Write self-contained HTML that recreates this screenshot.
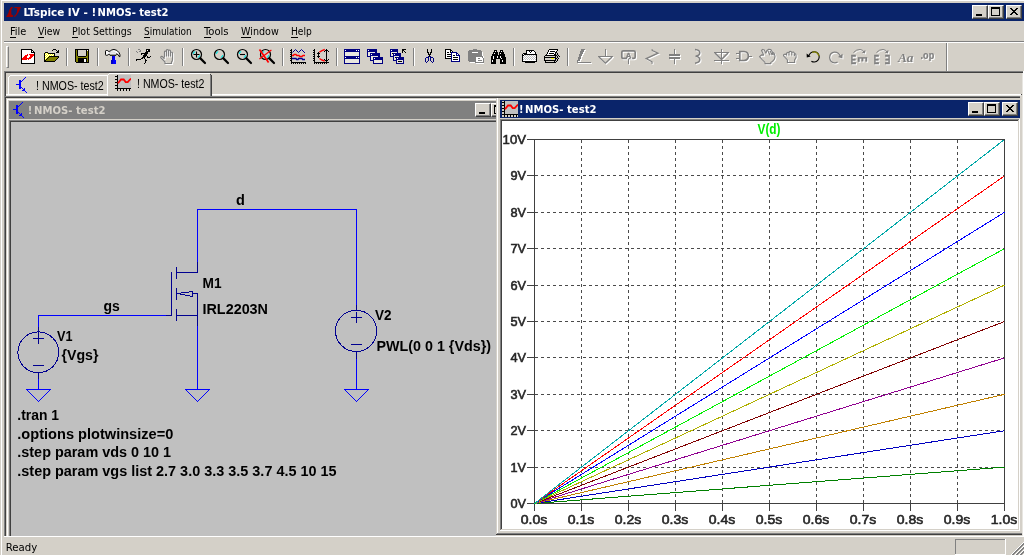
<!DOCTYPE html>
<html lang="en">
<head>
<meta charset="utf-8">
<title>LTspice IV - NMOS- test2</title>
<style>
html,body{margin:0;padding:0;background:#D4D0C8;}
body{width:1024px;height:555px;overflow:hidden;position:relative;font-family:"Liberation Sans",sans-serif;}
#app{position:absolute;left:0;top:0;width:1024px;height:555px;overflow:hidden;background:#D4D0C8;}
#app div,#app nav,#app header,#app footer,#app section,#app main{position:absolute;left:0;top:0;width:1024px;height:555px;margin:0;padding:0;}
i{position:absolute;display:block;font-style:normal;}
svg{position:absolute;display:block;overflow:hidden;}
svg.ov{left:0;top:0;pointer-events:none;will-change:transform;}
text{white-space:pre;}
.cbtn{position:absolute;display:block;background:#D4D0C8;box-sizing:border-box;
 border:1px solid;border-color:#FFFFFF #404040 #404040 #FFFFFF;
 box-shadow:inset -1px -1px 0 0 #808080;}
.cbtn i,.cbtn svg{margin:-1px 0 0 -1px;}
.tb{position:absolute;display:block;width:23px;height:22px;}
.tb svg{left:3px;top:3px;overflow:visible;}
.aa{position:absolute;left:3.6px;top:5.4px;font:italic bold 13.4px/14px 'Liberation Serif',serif;color:#808080;text-shadow:1px 1px 0 #fff;letter-spacing:-0.2px;white-space:pre;will-change:transform;}
.sep{position:absolute;display:block;width:2px;height:18px;background:#FFFFFF;border-left:1px solid #808080;box-sizing:border-box;}
</style>
</head>
<body>
<div id="app">
<i style="left:0px;top:0px;width:1024px;height:1px;background:#FFFFFF;"></i><i style="left:1px;top:0px;width:1px;height:555px;background:#FFFFFF;"></i><i style="left:0px;top:0px;width:1px;height:555px;background:#D4D0C8;"></i><i style="left:4px;top:71px;width:1px;height:465px;background:#808080;"></i><i style="left:5px;top:72px;width:1px;height:464px;background:#404040;"></i><i style="left:1022px;top:73px;width:1px;height:463px;background:#E8E6E1;"></i><i style="left:1023px;top:71px;width:1px;height:466px;background:#FFFFFF;"></i>
<header id="titlebar"><i style="left:4px;top:3px;width:1020px;height:18px;background:#0A246A;"></i><svg width="18" height="16" viewBox="0 0 18 16" style="left:5px;top:4px"><path d="M6 3H8L6.3 6V10L7 11H8.3L7.8 13H1L2 11.4L3.4 9L4.2 6Z" fill="#9A0000"/><path d="M9 3H16L15.2 5L12.6 10L10.5 12.4L9 13V12L10.4 11L11.8 8.6L12.2 5L12.3 4.2L10 4Z" fill="#9A0000"/></svg><svg class="ov" width="1024" height="555" viewBox="0 0 1024 555"><text y="16" font-family="'DejaVu Sans Condensed', 'Liberation Sans', sans-serif" font-size="11" font-weight="bold" fill="#fff" xml:space="preserve"><tspan x="23.4" textLength="72.8" lengthAdjust="spacingAndGlyphs">LTspice IV - !</tspan><tspan> </tspan><tspan x="97.6" textLength="71" lengthAdjust="spacingAndGlyphs">NMOS- test2</tspan></text></svg><span class="cbtn" style="left:972px;top:5px;width:16px;height:14px"><i style="left:4px;top:9px;width:6px;height:2px;background:#000"></i></span><span class="cbtn" style="left:988px;top:5px;width:16px;height:14px"><i style="left:3px;top:2px;width:9px;height:9px;box-sizing:border-box;border:1px solid #000;border-top-width:2px"></i></span><span class="cbtn" style="left:1006px;top:5px;width:16px;height:14px"><svg width="16" height="14" viewBox="0 0 16 14" shape-rendering="crispEdges" style="position:absolute;left:0;top:0"><path d="M4 3h2v1h1v1h2v-1h1v-1h2v1h-1v1h-1v1h-1v1h1v1h1v1h1v1h-2v-1h-1v-1h-2v1h-1v1h-2v-1h1v-1h1v-1h1v-1h-1v-1h-1v-1h-1z" fill="#000"/></svg></span></header>
<nav id="menubar"><svg class="ov" width="1024" height="555" viewBox="0 0 1024 555"><text x="10" y="35" font-family="'DejaVu Sans Condensed', 'Liberation Sans', sans-serif" font-size="11" fill="#000" textLength="16.3" lengthAdjust="spacingAndGlyphs" xml:space="preserve">File</text><text x="38" y="35" font-family="'DejaVu Sans Condensed', 'Liberation Sans', sans-serif" font-size="11" fill="#000" textLength="22.2" lengthAdjust="spacingAndGlyphs" xml:space="preserve">View</text><text x="72" y="35" font-family="'DejaVu Sans Condensed', 'Liberation Sans', sans-serif" font-size="11" fill="#000" textLength="59.8" lengthAdjust="spacingAndGlyphs" xml:space="preserve">Plot Settings</text><text x="144" y="35" font-family="'DejaVu Sans Condensed', 'Liberation Sans', sans-serif" font-size="11" fill="#000" textLength="47.8" lengthAdjust="spacingAndGlyphs" xml:space="preserve">Simulation</text><text x="204" y="35" font-family="'DejaVu Sans Condensed', 'Liberation Sans', sans-serif" font-size="11" fill="#000" textLength="24.6" lengthAdjust="spacingAndGlyphs" xml:space="preserve">Tools</text><text x="241" y="35" font-family="'DejaVu Sans Condensed', 'Liberation Sans', sans-serif" font-size="11" fill="#000" textLength="37.8" lengthAdjust="spacingAndGlyphs" xml:space="preserve">Window</text><text x="291" y="35" font-family="'DejaVu Sans Condensed', 'Liberation Sans', sans-serif" font-size="11" fill="#000" textLength="20.8" lengthAdjust="spacingAndGlyphs" xml:space="preserve">Help</text></svg><i style="left:10px;top:37px;width:6px;height:1px;background:#000;"></i><i style="left:38px;top:37px;width:6px;height:1px;background:#000;"></i><i style="left:72px;top:37px;width:6px;height:1px;background:#000;"></i><i style="left:144px;top:37px;width:6px;height:1px;background:#000;"></i><i style="left:204px;top:37px;width:7px;height:1px;background:#000;"></i><i style="left:241px;top:37px;width:10px;height:1px;background:#000;"></i><i style="left:291px;top:37px;width:7px;height:1px;background:#000;"></i></nav>
<div id="toolbar"><i style="left:4px;top:41px;width:1020px;height:1px;background:#808080;"></i><i style="left:4px;top:42px;width:1020px;height:1px;background:#FFFFFF;"></i><i style="left:6px;top:46px;width:3px;height:22px;background:#D4D0C8;box-sizing:border-box;border:1px solid;border-color:#fff #808080 #808080 #fff"></i><i style="left:946px;top:43px;width:1px;height:28px;background:#808080;"></i><i style="left:947px;top:43px;width:1px;height:28px;background:#FFFFFF;"></i><span class="tb" title="new" style="left:17px;top:46px"><svg width="18" height="17" viewBox="0 0 18 17" shape-rendering="crispEdges"><path d="M1 0h11v1h-11zM1 1h1v1h-1zM11 1h2v1h-2zM1 2h1v1h-1zM11 2h1v1h-1zM13 2h1v1h-1zM1 3h1v1h-1zM11 3h4v1h-4zM1 4h1v1h-1zM14 4h1v1h-1zM1 5h1v1h-1zM14 5h1v1h-1zM1 6h1v1h-1zM14 6h1v1h-1zM1 7h1v1h-1zM14 7h1v1h-1zM1 8h1v1h-1zM14 8h1v1h-1zM1 9h1v1h-1zM14 9h1v1h-1zM1 10h1v1h-1zM14 10h1v1h-1zM1 11h1v1h-1zM14 11h1v1h-1zM1 12h1v1h-1zM14 12h1v1h-1zM1 13h1v1h-1zM14 13h1v1h-1zM1 14h14v1h-14z" fill="#000000"/><path d="M2 1h9v1h-9zM2 2h9v1h-9zM12 2h1v1h-1zM2 3h9v1h-9zM2 4h12v1h-12zM2 5h5v1h-5zM8 5h1v1h-1zM2 6h3v1h-3zM8 6h2v1h-2zM2 7h2v1h-2zM7 7h3v1h-3zM13 7h1v1h-1zM2 8h1v1h-1zM7 8h2v1h-2zM12 8h2v1h-2zM11 9h3v1h-3zM7 10h1v1h-1zM9 10h5v1h-5zM2 11h12v1h-12zM2 12h12v1h-12zM2 13h12v1h-12z" fill="#FFFFFF"/><path d="M7 5h1v1h-1zM9 5h5v1h-5zM5 6h3v1h-3zM10 6h4v1h-4zM4 7h3v1h-3zM10 7h3v1h-3zM3 8h4v1h-4zM9 8h3v1h-3zM2 9h9v1h-9zM2 10h5v1h-5zM8 10h1v1h-1z" fill="#FF0000"/></svg></span><span class="tb" title="open" style="left:40px;top:46px"><svg width="18" height="17" viewBox="0 0 18 17" shape-rendering="crispEdges"><path d="M10 0h3v1h-3zM9 1h1v1h-1zM13 1h1v1h-1zM15 1h1v1h-1zM14 2h2v1h-2zM2 3h3v1h-3zM13 3h3v1h-3zM1 4h1v1h-1zM5 4h7v1h-7zM1 5h1v1h-1zM11 5h1v1h-1zM1 6h1v1h-1zM11 6h1v1h-1zM1 7h1v1h-1zM6 7h10v1h-10zM1 8h1v1h-1zM5 8h1v1h-1zM15 8h1v1h-1zM1 9h1v1h-1zM4 9h1v1h-1zM14 9h1v1h-1zM1 10h1v1h-1zM3 10h1v1h-1zM13 10h1v1h-1zM1 11h2v1h-2zM12 11h1v1h-1zM1 12h11v1h-11z" fill="#000000"/><path d="M2 4h1v1h-1zM4 4h1v1h-1zM3 5h1v1h-1zM5 5h1v1h-1zM7 5h1v1h-1zM9 5h1v1h-1zM2 6h1v1h-1zM4 6h1v1h-1zM6 6h1v1h-1zM8 6h1v1h-1zM10 6h1v1h-1zM3 7h1v1h-1zM5 7h1v1h-1zM2 8h1v1h-1zM4 8h1v1h-1zM3 9h1v1h-1zM2 10h1v1h-1z" fill="#FFFF00"/><path d="M3 4h1v1h-1zM2 5h1v1h-1zM4 5h1v1h-1zM6 5h1v1h-1zM8 5h1v1h-1zM10 5h1v1h-1zM3 6h1v1h-1zM5 6h1v1h-1zM7 6h1v1h-1zM9 6h1v1h-1zM2 7h1v1h-1zM4 7h1v1h-1zM3 8h1v1h-1zM2 9h1v1h-1z" fill="#FFFFFF"/><path d="M6 8h9v1h-9zM5 9h9v1h-9zM4 10h9v1h-9zM3 11h9v1h-9z" fill="#808000"/></svg></span><i class="sep" style="left:66px;top:48px"></i><span class="tb" title="save" style="left:71px;top:46px"><svg width="18" height="17" viewBox="0 0 18 17" shape-rendering="crispEdges"><path d="M1 0h14v1h-14zM1 1h1v1h-1zM3 1h1v1h-1zM12 1h1v1h-1zM14 1h1v1h-1zM1 2h1v1h-1zM3 2h1v1h-1zM12 2h1v1h-1zM14 2h1v1h-1zM1 3h1v1h-1zM3 3h1v1h-1zM12 3h1v1h-1zM14 3h1v1h-1zM1 4h1v1h-1zM3 4h1v1h-1zM12 4h1v1h-1zM14 4h1v1h-1zM1 5h1v1h-1zM3 5h1v1h-1zM12 5h1v1h-1zM14 5h1v1h-1zM1 6h1v1h-1zM3 6h1v1h-1zM12 6h1v1h-1zM14 6h1v1h-1zM1 7h1v1h-1zM4 7h8v1h-8zM14 7h1v1h-1zM1 8h1v1h-1zM14 8h1v1h-1zM1 9h1v1h-1zM4 9h9v1h-9zM14 9h1v1h-1zM1 10h1v1h-1zM4 10h6v1h-6zM12 10h1v1h-1zM14 10h1v1h-1zM1 11h1v1h-1zM4 11h6v1h-6zM12 11h1v1h-1zM14 11h1v1h-1zM1 12h1v1h-1zM4 12h6v1h-6zM12 12h1v1h-1zM14 12h1v1h-1zM2 13h13v1h-13z" fill="#000000"/><path d="M2 1h1v1h-1zM2 2h1v1h-1zM13 2h1v1h-1zM2 3h1v1h-1zM13 3h1v1h-1zM2 4h1v1h-1zM13 4h1v1h-1zM2 5h1v1h-1zM13 5h1v1h-1zM2 6h1v1h-1zM13 6h1v1h-1zM2 7h2v1h-2zM12 7h2v1h-2zM2 8h12v1h-12zM2 9h2v1h-2zM13 9h1v1h-1zM2 10h2v1h-2zM13 10h1v1h-1zM2 11h2v1h-2zM13 11h1v1h-1zM2 12h2v1h-2zM13 12h1v1h-1z" fill="#808000"/><path d="M4 1h8v1h-8zM4 2h8v1h-8zM4 3h8v1h-8zM4 4h8v1h-8zM4 5h8v1h-8zM4 6h8v1h-8z" fill="#D4D0C8"/><path d="M13 1h1v1h-1zM10 10h2v1h-2zM10 11h2v1h-2zM10 12h2v1h-2z" fill="#FFFFFF"/></svg></span><i class="sep" style="left:97px;top:48px"></i><span class="tb" title="hammer" style="left:102px;top:46px"><svg width="18" height="17" viewBox="0 0 18 17" shape-rendering="crispEdges"><g shape-rendering="geometricPrecision" transform="translate(-1 0)"><path d="M1.5 2.2Q1.5 1.5 2.3 1.5H3.2Q4 1.5 4.3 2.3L6 2.3Q7.5 0.5 10 0.5Q13 0.6 15 3.6Q16.3 5.6 16 7.6L15.2 7.6Q14.6 5.2 12.4 4.8L12 6.3H6L5.6 5.2L4.3 5.4Q4 6.3 3.2 6.3H2.3Q1.5 6.3 1.5 5.6Z" fill="#FFFFFF" stroke="#000" stroke-width="1"/><path d="M6 5.4H12.2" stroke="#A0A0A0" stroke-width="1.2" fill="none"/><path d="M5 3.4Q8 2.6 11.5 3.4" stroke="#C8C8C8" stroke-width="0.9" fill="none"/></g><path d="M7 7h1v1h-1zM7 8h1v1h-1zM7 9h1v1h-1zM7 10h1v1h-1zM6 11h2v1h-2zM6 12h2v1h-2zM6 13h2v1h-2zM6 14h2v1h-2z" fill="#0000C0"/><path d="M8 7h2v1h-2zM8 8h2v1h-2zM8 9h2v1h-2zM8 10h2v1h-2zM8 11h3v1h-3zM8 12h3v1h-3zM8 13h3v1h-3zM8 14h3v1h-3z" fill="#0000FF"/></svg></span><i class="sep" style="left:128px;top:48px"></i><span class="tb" title="run" style="left:133px;top:46px"><svg width="18" height="17" viewBox="0 0 18 17" shape-rendering="crispEdges"><path d="M2 0h2v1h-2zM4 1h1v1h-1zM0 2h1v1h-1zM3 2h2v1h-2zM1 3h1v1h-1z" fill="#808080"/><path d="M10 0h4v1h-4zM10 1h1v1h-1zM12 1h2v1h-2zM10 2h4v1h-4zM9 3h3v1h-3zM5 4h7v1h-7zM5 5h1v1h-1zM8 5h3v1h-3zM7 6h4v1h-4zM7 7h3v1h-3zM11 7h1v1h-1zM14 7h1v1h-1zM6 8h3v1h-3zM11 8h3v1h-3zM5 9h2v1h-2zM8 9h1v1h-1zM0 10h5v1h-5zM9 10h1v1h-1zM0 11h1v1h-1zM9 11h2v1h-2zM9 12h1v1h-1zM9 13h1v1h-1zM8 14h1v1h-1z" fill="#000000"/><path d="M11 1h1v1h-1z" fill="#FFFFFF"/></svg></span><span class="tb" title="halt" style="left:156px;top:46px"><svg width="18" height="17" viewBox="0 0 18 17" shape-rendering="crispEdges"><g transform="translate(1 1)" stroke="#FFFFFF" fill="#FFFFFF" color="#FFFFFF"><path d="M5.5 8.5V3Q5.5 2 6.5 2T7.5 3V1.5Q7.5 0.5 8.5 0.5T9.5 1.5V2Q9.5 1 10.5 1T11.5 2V4Q11.5 3 12.5 3T13.5 4V10.5Q13.5 12 12.5 13V14.5H6V13L2 8.8Q1.4 8 2.2 7.6Q3 7.2 3.8 8L5.5 9.8M7.5 3V7.5M9.5 2V7.5M11.5 4V7.5" fill="none" stroke-width="1.2" shape-rendering="geometricPrecision"/></g><g stroke="#808080" fill="#808080" color="#808080"><path d="M5.5 8.5V3Q5.5 2 6.5 2T7.5 3V1.5Q7.5 0.5 8.5 0.5T9.5 1.5V2Q9.5 1 10.5 1T11.5 2V4Q11.5 3 12.5 3T13.5 4V10.5Q13.5 12 12.5 13V14.5H6V13L2 8.8Q1.4 8 2.2 7.6Q3 7.2 3.8 8L5.5 9.8M7.5 3V7.5M9.5 2V7.5M11.5 4V7.5" fill="none" stroke-width="1.2" shape-rendering="geometricPrecision"/></g></svg></span><i class="sep" style="left:182px;top:48px"></i><span class="tb" title="zoomin" style="left:187px;top:46px"><svg width="18" height="17" viewBox="0 0 18 17" shape-rendering="crispEdges"><g shape-rendering="geometricPrecision"><circle cx="6.5" cy="5.5" r="5" fill="none" stroke="#000" stroke-width="1.2"/><path d="M10.4 9.4L15 14" stroke="#000" stroke-width="2.2" stroke-linecap="round"/><path d="M3.2 4.8Q3.6 3 5.2 2.4" stroke="#00E8E8" stroke-width="1.1" fill="none"/><path d="M9.8 6.2Q9.4 8 7.8 8.6" stroke="#00E8E8" stroke-width="1.1" fill="none"/><path d="M3.5 5.5h6M6.5 2.5v6" stroke="#000" stroke-width="1.1" fill="none"/></g></svg></span><span class="tb" title="zoom" style="left:210px;top:46px"><svg width="18" height="17" viewBox="0 0 18 17" shape-rendering="crispEdges"><g shape-rendering="geometricPrecision"><circle cx="6.5" cy="5.5" r="5" fill="none" stroke="#000" stroke-width="1.2"/><path d="M10.4 9.4L15 14" stroke="#000" stroke-width="2.2" stroke-linecap="round"/><path d="M3.2 4.8Q3.6 3 5.2 2.4" stroke="#00E8E8" stroke-width="1.1" fill="none"/><path d="M9.8 6.2Q9.4 8 7.8 8.6" stroke="#00E8E8" stroke-width="1.1" fill="none"/></g></svg></span><span class="tb" title="zoomout" style="left:233px;top:46px"><svg width="18" height="17" viewBox="0 0 18 17" shape-rendering="crispEdges"><g shape-rendering="geometricPrecision"><circle cx="6.5" cy="5.5" r="5" fill="none" stroke="#000" stroke-width="1.2"/><path d="M10.4 9.4L15 14" stroke="#000" stroke-width="2.2" stroke-linecap="round"/><path d="M3.2 4.8Q3.6 3 5.2 2.4" stroke="#00E8E8" stroke-width="1.1" fill="none"/><path d="M9.8 6.2Q9.4 8 7.8 8.6" stroke="#00E8E8" stroke-width="1.1" fill="none"/><path d="M4 5.5h5" stroke="#000" stroke-width="1.1" fill="none"/></g></svg></span><span class="tb" title="zoomfit" style="left:256px;top:46px"><svg width="18" height="17" viewBox="0 0 18 17" shape-rendering="crispEdges"><g shape-rendering="geometricPrecision"><circle cx="6.5" cy="5.5" r="5" fill="none" stroke="#000" stroke-width="1.2"/><path d="M10.4 9.4L15 14" stroke="#000" stroke-width="2.2" stroke-linecap="round"/><path d="M3.2 4.8Q3.6 3 5.2 2.4" stroke="#00E8E8" stroke-width="1.1" fill="none"/><path d="M9.8 6.2Q9.4 8 7.8 8.6" stroke="#00E8E8" stroke-width="1.1" fill="none"/><path d="M0.5 0.6L9.6 13.6" stroke="#FF0000" stroke-width="1.7" fill="none"/><path d="M12.4 1L0.4 10" stroke="#FF0000" stroke-width="1.1" fill="none"/></g></svg></span><i class="sep" style="left:282px;top:48px"></i><span class="tb" title="wave" style="left:287px;top:46px"><svg width="18" height="17" viewBox="0 0 18 17" shape-rendering="crispEdges"><path d="M1 0h1v1h-1zM0 1h2v1h-2zM1 2h1v1h-1zM0 3h2v1h-2zM1 4h1v1h-1zM0 5h2v1h-2zM1 6h1v1h-1zM0 7h2v1h-2zM1 8h1v1h-1zM0 9h2v1h-2zM1 10h1v1h-1zM0 11h2v1h-2zM1 12h1v1h-1zM1 13h15v1h-15zM1 14h1v1h-1zM3 14h1v1h-1zM5 14h1v1h-1zM7 14h1v1h-1zM9 14h1v1h-1zM11 14h1v1h-1zM13 14h1v1h-1zM15 14h1v1h-1z" fill="#000000"/><g shape-rendering="geometricPrecision" fill="none"><path d="M2.5 3.5L5.5 0.5L8.5 3.5L11.5 0.5L15 4" stroke="#000090" stroke-width="1"/><path d="M2 6.5H3.5L4 5.5H6L6.8 6.5H9L9.8 7.5H12L13 6.5H15" stroke="#FF0000" stroke-width="1.3"/><path d="M2 9.5H6L6.6 10.5H8L8.6 9.5H12L12.6 10.5H15" stroke="#000090" stroke-width="1.4"/></g></svg></span><span class="tb" title="autorange" style="left:310px;top:46px"><svg width="18" height="17" viewBox="0 0 18 17" shape-rendering="crispEdges"><path d="M1 0h1v1h-1zM13 0h1v1h-1zM0 1h2v1h-2zM12 1h3v1h-3zM1 2h1v1h-1zM11 2h1v1h-1zM13 2h1v1h-1zM15 2h1v1h-1zM0 3h2v1h-2zM5 3h1v1h-1zM13 3h1v1h-1zM1 4h1v1h-1zM4 4h3v1h-3zM13 4h1v1h-1zM0 5h2v1h-2zM5 5h1v1h-1zM13 5h1v1h-1zM1 6h1v1h-1zM5 6h1v1h-1zM13 6h1v1h-1zM0 7h2v1h-2zM4 7h3v1h-3zM13 7h1v1h-1zM1 8h1v1h-1zM5 8h1v1h-1zM13 8h1v1h-1zM0 9h2v1h-2zM13 9h1v1h-1zM1 10h1v1h-1zM11 10h1v1h-1zM13 10h1v1h-1zM15 10h1v1h-1zM0 11h2v1h-2zM12 11h3v1h-3zM1 12h1v1h-1zM13 12h1v1h-1zM1 13h15v1h-15zM1 14h1v1h-1zM3 14h1v1h-1zM5 14h1v1h-1zM7 14h1v1h-1zM9 14h1v1h-1zM11 14h1v1h-1zM13 14h1v1h-1z" fill="#000000"/><g shape-rendering="geometricPrecision" fill="none"><path d="M11.8 0.5L9 1.6L6.4 3.1" stroke="#FF0000" stroke-width="1.4"/><path d="M6.4 9.5L9 11L11.8 12.1" stroke="#FF0000" stroke-width="1.4"/></g></svg></span><i class="sep" style="left:336px;top:48px"></i><span class="tb" title="tile" style="left:341px;top:46px"><svg width="18" height="17" viewBox="0 0 18 17" shape-rendering="crispEdges"><path d="M0 0h16v1h-16zM0 1h1v1h-1zM2 1h10v1h-10zM13 1h1v1h-1zM15 1h1v1h-1zM0 2h16v1h-16zM0 3h1v1h-1zM15 3h1v1h-1zM0 4h1v1h-1zM15 4h1v1h-1zM0 5h1v1h-1zM15 5h1v1h-1zM0 6h1v1h-1zM15 6h1v1h-1zM0 7h16v1h-16zM0 8h1v1h-1zM2 8h10v1h-10zM13 8h1v1h-1zM15 8h1v1h-1zM0 9h16v1h-16zM0 10h1v1h-1zM15 10h1v1h-1zM0 11h1v1h-1zM15 11h1v1h-1zM0 12h1v1h-1zM15 12h1v1h-1zM0 13h1v1h-1zM15 13h1v1h-1zM0 14h16v1h-16z" fill="#000080"/><path d="M1 1h1v1h-1zM12 1h1v1h-1zM14 1h1v1h-1zM1 8h1v1h-1zM12 8h1v1h-1zM14 8h1v1h-1z" fill="#FFFFFF"/><path d="M1 3h14v1h-14zM1 4h14v1h-14zM1 5h14v1h-14zM1 6h14v1h-14zM1 10h14v1h-14zM1 11h14v1h-14zM1 12h14v1h-14zM1 13h14v1h-14z" fill="#E8E6E0"/></svg></span><span class="tb" title="cascade" style="left:364px;top:46px"><svg width="18" height="17" viewBox="0 0 18 17" shape-rendering="crispEdges"><path d="M0 0h10v1h-10zM0 1h1v1h-1zM2 1h8v1h-8zM0 2h10v1h-10zM0 3h1v1h-1zM8 3h2v1h-2zM0 4h1v1h-1zM3 4h10v1h-10zM0 5h1v1h-1zM3 5h1v1h-1zM5 5h8v1h-8zM0 6h1v1h-1zM3 6h10v1h-10zM0 7h4v1h-4zM11 7h2v1h-2zM3 8h1v1h-1zM6 8h10v1h-10zM3 9h1v1h-1zM6 9h1v1h-1zM8 9h8v1h-8zM3 10h1v1h-1zM6 10h10v1h-10zM3 11h4v1h-4zM15 11h1v1h-1zM6 12h1v1h-1zM15 12h1v1h-1zM6 13h1v1h-1zM15 13h1v1h-1zM6 14h10v1h-10z" fill="#000080"/><path d="M1 1h1v1h-1zM4 5h1v1h-1zM7 9h1v1h-1z" fill="#FFFFFF"/><path d="M1 3h7v1h-7zM1 4h2v1h-2zM1 5h2v1h-2zM1 6h2v1h-2zM4 7h7v1h-7zM4 8h2v1h-2zM4 9h2v1h-2zM4 10h2v1h-2zM7 11h8v1h-8zM7 12h8v1h-8zM7 13h8v1h-8z" fill="#E8E6E0"/></svg></span><span class="tb" title="closeall" style="left:387px;top:46px"><svg width="18" height="17" viewBox="0 0 18 17" shape-rendering="crispEdges"><path d="M0 0h8v1h-8zM0 1h1v1h-1zM2 1h6v1h-6zM0 2h8v1h-8zM0 3h1v1h-1zM7 3h1v1h-1zM0 4h1v1h-1zM3 4h8v1h-8zM0 5h1v1h-1zM3 5h1v1h-1zM5 5h6v1h-6zM0 6h1v1h-1zM3 6h8v1h-8zM0 7h4v1h-4zM9 7h2v1h-2zM3 8h1v1h-1zM6 8h8v1h-8zM3 9h1v1h-1zM6 9h1v1h-1zM8 9h6v1h-6zM3 10h1v1h-1zM6 10h8v1h-8zM3 11h4v1h-4zM13 11h1v1h-1zM6 12h1v1h-1zM13 12h1v1h-1zM6 13h1v1h-1zM13 13h1v1h-1zM6 14h8v1h-8z" fill="#000080"/><path d="M12 0h4v1h-4zM12 1h2v1h-2zM12 2h1v1h-1zM14 2h1v1h-1zM12 3h1v1h-1zM15 3h1v1h-1zM2 4h1v1h-1zM5 8h1v1h-1zM8 12h4v1h-4z" fill="#000000"/><path d="M1 1h1v1h-1zM4 5h1v1h-1zM7 9h1v1h-1z" fill="#FFFFFF"/><path d="M1 3h6v1h-6zM1 4h1v1h-1zM1 5h2v1h-2zM1 6h2v1h-2zM4 7h5v1h-5zM4 8h1v1h-1zM4 9h2v1h-2zM4 10h2v1h-2zM7 11h6v1h-6zM7 12h1v1h-1zM12 12h1v1h-1zM7 13h6v1h-6z" fill="#E8E6E0"/></svg></span><i class="sep" style="left:413px;top:48px"></i><span class="tb" title="cut" style="left:418px;top:46px"><svg width="18" height="17" viewBox="0 0 18 17" shape-rendering="crispEdges"><path d="M6 0h1v1h-1zM10 0h1v1h-1zM6 1h1v1h-1zM10 1h1v1h-1zM6 2h1v1h-1zM10 2h1v1h-1zM6 3h2v1h-2zM9 3h2v1h-2zM7 4h1v1h-1zM9 4h1v1h-1zM7 5h3v1h-3zM8 6h1v1h-1zM8 7h1v1h-1z" fill="#000000"/><path d="M7 7h1v1h-1zM9 7h1v1h-1zM5 8h3v1h-3zM9 8h3v1h-3zM4 9h1v1h-1zM7 9h1v1h-1zM9 9h1v1h-1zM12 9h1v1h-1zM4 10h1v1h-1zM7 10h1v1h-1zM9 10h1v1h-1zM12 10h1v1h-1zM4 11h1v1h-1zM7 11h1v1h-1zM9 11h1v1h-1zM12 11h1v1h-1zM4 12h1v1h-1zM6 12h1v1h-1zM10 12h1v1h-1zM12 12h1v1h-1zM5 13h1v1h-1zM11 13h1v1h-1z" fill="#000080"/></svg></span><span class="tb" title="copy" style="left:441px;top:46px"><svg width="18" height="17" viewBox="0 0 18 17" shape-rendering="crispEdges"><path d="M1 0h6v1h-6zM1 1h1v1h-1zM6 1h2v1h-2zM1 2h1v1h-1zM6 2h1v1h-1zM8 2h1v1h-1zM1 3h1v1h-1zM3 3h2v1h-2zM6 3h1v1h-1zM1 4h1v1h-1zM1 5h1v1h-1zM3 5h4v1h-4zM1 6h1v1h-1zM9 6h2v1h-2zM1 7h1v1h-1zM3 7h4v1h-4zM1 8h1v1h-1zM9 8h5v1h-5zM1 9h6v1h-6zM9 10h5v1h-5z" fill="#000000"/><path d="M2 1h4v1h-4zM2 2h4v1h-4zM7 2h1v1h-1zM2 3h1v1h-1zM5 3h1v1h-1zM2 4h5v1h-5zM8 4h4v1h-4zM2 5h1v1h-1zM8 5h4v1h-4zM13 5h1v1h-1zM2 6h5v1h-5zM8 6h1v1h-1zM11 6h1v1h-1zM2 7h1v1h-1zM8 7h7v1h-7zM2 8h5v1h-5zM8 8h1v1h-1zM14 8h1v1h-1zM8 9h7v1h-7zM8 10h1v1h-1zM14 10h1v1h-1zM8 11h7v1h-7z" fill="#FFFFFF"/><path d="M7 3h6v1h-6zM7 4h1v1h-1zM12 4h2v1h-2zM7 5h1v1h-1zM12 5h1v1h-1zM14 5h1v1h-1zM7 6h1v1h-1zM12 6h4v1h-4zM7 7h1v1h-1zM15 7h1v1h-1zM7 8h1v1h-1zM15 8h1v1h-1zM7 9h1v1h-1zM15 9h1v1h-1zM7 10h1v1h-1zM15 10h1v1h-1zM7 11h1v1h-1zM15 11h1v1h-1zM7 12h9v1h-9z" fill="#000080"/></svg></span><span class="tb" title="paste" style="left:464px;top:46px"><svg width="18" height="17" viewBox="0 0 18 17" shape-rendering="crispEdges"><path d="M6 0h4v1h-4zM2 1h12v1h-12zM1 2h14v1h-14zM1 3h4v1h-4zM11 3h4v1h-4zM1 4h14v1h-14zM1 5h14v1h-14zM1 6h14v1h-14zM1 7h15v1h-15zM1 8h8v1h-8zM15 8h1v1h-1zM1 9h8v1h-8zM11 9h2v1h-2zM16 9h1v1h-1zM1 10h8v1h-8zM16 10h1v1h-1zM1 11h8v1h-8zM11 11h4v1h-4zM16 11h1v1h-1zM2 12h7v1h-7zM16 12h1v1h-1zM8 13h9v1h-9z" fill="#808080"/><path d="M5 3h6v1h-6zM15 3h1v1h-1zM15 4h1v1h-1zM15 5h1v1h-1zM15 6h1v1h-1zM16 7h1v1h-1zM9 8h6v1h-6zM16 8h1v1h-1zM9 9h2v1h-2zM13 9h3v1h-3zM9 10h7v1h-7zM9 11h2v1h-2zM15 11h1v1h-1zM9 12h7v1h-7zM3 13h5v1h-5zM9 14h8v1h-8z" fill="#FFFFFF"/></svg></span><span class="tb" title="find" style="left:487px;top:46px"><svg width="18" height="17" viewBox="0 0 18 17" shape-rendering="crispEdges"><path d="M4 1h3v1h-3zM10 1h3v1h-3zM4 2h1v1h-1zM6 2h1v1h-1zM10 2h1v1h-1zM12 2h1v1h-1zM3 3h5v1h-5zM9 3h5v1h-5zM3 4h1v1h-1zM5 4h3v1h-3zM9 4h1v1h-1zM11 4h3v1h-3zM2 5h6v1h-6zM9 5h6v1h-6zM2 6h13v1h-13zM1 7h2v1h-2zM4 7h3v1h-3zM8 7h2v1h-2zM11 7h4v1h-4zM1 8h2v1h-2zM4 8h3v1h-3zM8 8h2v1h-2zM11 8h5v1h-5zM1 9h2v1h-2zM4 9h7v1h-7zM12 9h4v1h-4zM1 10h5v1h-5zM10 10h6v1h-6zM1 11h1v1h-1zM3 11h3v1h-3zM10 11h2v1h-2zM13 11h3v1h-3zM1 12h1v1h-1zM3 12h3v1h-3zM10 12h2v1h-2zM13 12h3v1h-3zM1 13h5v1h-5zM10 13h6v1h-6zM1 14h5v1h-5zM10 14h6v1h-6z" fill="#000000"/><path d="M5 2h1v1h-1zM11 2h1v1h-1zM4 4h1v1h-1zM10 4h1v1h-1zM3 7h1v1h-1zM7 7h1v1h-1zM10 7h1v1h-1zM3 8h1v1h-1zM7 8h1v1h-1zM10 8h1v1h-1zM3 9h1v1h-1zM11 9h1v1h-1zM2 11h1v1h-1zM12 11h1v1h-1zM2 12h1v1h-1zM12 12h1v1h-1z" fill="#FFFFFF"/></svg></span><i class="sep" style="left:513px;top:48px"></i><span class="tb" title="setup" style="left:518px;top:46px"><svg width="18" height="17" viewBox="0 0 18 17" shape-rendering="crispEdges"><path d="M5 1h8v1h-8zM5 2h1v1h-1zM8 2h1v1h-1zM10 2h1v1h-1zM13 2h1v1h-1zM5 3h1v1h-1zM9 3h1v1h-1zM14 3h1v1h-1zM2 4h4v1h-4zM14 4h1v1h-1zM1 5h1v1h-1zM3 5h13v1h-13zM1 6h2v1h-2zM15 6h1v1h-1zM1 7h1v1h-1zM15 7h1v1h-1zM1 8h1v1h-1zM15 8h1v1h-1zM1 9h1v1h-1zM15 9h1v1h-1zM1 10h1v1h-1zM15 10h1v1h-1zM1 11h1v1h-1zM15 11h1v1h-1zM1 12h15v1h-15zM4 13h10v1h-10z" fill="#000000"/><path d="M6 2h2v1h-2zM9 2h1v1h-1zM11 2h2v1h-2zM6 3h3v1h-3zM10 3h4v1h-4zM6 4h8v1h-8zM2 5h1v1h-1zM3 6h1v1h-1zM5 6h1v1h-1zM7 6h1v1h-1zM9 6h1v1h-1zM11 6h1v1h-1zM13 6h1v1h-1zM2 7h1v1h-1zM4 7h1v1h-1zM6 7h1v1h-1zM8 7h1v1h-1zM10 7h1v1h-1zM12 7h1v1h-1zM14 7h1v1h-1zM3 8h1v1h-1zM5 8h1v1h-1zM7 8h1v1h-1zM9 8h1v1h-1zM11 8h1v1h-1zM13 8h1v1h-1zM2 9h1v1h-1zM4 9h1v1h-1zM6 9h1v1h-1zM8 9h1v1h-1zM10 9h1v1h-1zM12 9h1v1h-1zM14 9h1v1h-1zM3 10h1v1h-1zM5 10h1v1h-1zM7 10h1v1h-1zM9 10h1v1h-1zM11 10h1v1h-1zM13 10h1v1h-1zM2 11h13v1h-13z" fill="#FFFFFF"/><path d="M4 6h1v1h-1zM6 6h1v1h-1zM8 6h1v1h-1zM10 6h1v1h-1zM12 6h1v1h-1zM14 6h1v1h-1zM3 7h1v1h-1zM5 7h1v1h-1zM7 7h1v1h-1zM9 7h1v1h-1zM11 7h1v1h-1zM13 7h1v1h-1zM2 8h1v1h-1zM4 8h1v1h-1zM6 8h1v1h-1zM8 8h1v1h-1zM10 8h1v1h-1zM12 8h1v1h-1zM14 8h1v1h-1zM3 9h1v1h-1zM5 9h1v1h-1zM7 9h1v1h-1zM9 9h1v1h-1zM11 9h1v1h-1zM13 9h1v1h-1zM2 10h1v1h-1zM4 10h1v1h-1zM6 10h1v1h-1zM8 10h1v1h-1zM10 10h1v1h-1zM12 10h1v1h-1zM14 10h1v1h-1z" fill="#C0C0C0"/></svg></span><span class="tb" title="print" style="left:541px;top:46px"><svg width="18" height="17" viewBox="0 0 18 17" shape-rendering="crispEdges"><path d="M5 0h9v1h-9zM4 1h1v1h-1zM13 1h1v1h-1zM4 2h1v1h-1zM6 2h5v1h-5zM12 2h1v1h-1zM3 3h1v1h-1zM11 3h2v1h-2zM3 4h1v1h-1zM5 4h5v1h-5zM11 4h1v1h-1zM13 4h1v1h-1zM2 5h1v1h-1zM10 5h2v1h-2zM13 5h1v1h-1zM1 6h12v1h-12zM14 6h1v1h-1zM0 7h1v1h-1zM11 7h1v1h-1zM13 7h1v1h-1zM15 7h1v1h-1zM0 8h12v1h-12zM13 8h1v1h-1zM0 9h1v1h-1zM11 9h2v1h-2zM14 9h1v1h-1zM0 10h1v1h-1zM11 10h1v1h-1zM13 10h1v1h-1zM0 11h12v1h-12zM13 11h1v1h-1zM1 12h1v1h-1zM10 12h1v1h-1zM12 12h1v1h-1zM1 13h11v1h-11z" fill="#000000"/><path d="M5 1h8v1h-8zM5 2h1v1h-1zM11 2h1v1h-1zM4 3h7v1h-7zM4 4h1v1h-1zM10 4h1v1h-1zM3 5h7v1h-7z" fill="#FFFFFF"/><path d="M12 4h1v1h-1zM12 5h1v1h-1zM14 5h1v1h-1zM13 6h1v1h-1zM12 7h1v1h-1zM14 7h1v1h-1zM12 8h1v1h-1zM14 8h1v1h-1zM13 9h1v1h-1zM12 10h1v1h-1zM12 11h1v1h-1zM11 12h1v1h-1z" fill="#C0C0C0"/><path d="M1 7h10v1h-10zM1 9h6v1h-6zM10 9h1v1h-1zM1 10h10v1h-10zM2 12h8v1h-8z" fill="#D4D0C8"/><path d="M7 9h3v1h-3z" fill="#FFFF00"/></svg></span><i class="sep" style="left:567px;top:48px"></i><span class="tb" title="wire" style="left:572px;top:46px"><svg width="18" height="17" viewBox="0 0 18 17" shape-rendering="crispEdges"><g transform="translate(1 1)" stroke="#FFFFFF" fill="#FFFFFF" color="#FFFFFF"><path d="M6 0H10L4.2 12.4H2Z" stroke="none"/><path d="M2 12h1v1h-1z" stroke="none"/><path d="M2 13h14v1h-14z" stroke="none"/></g><g stroke="#808080" fill="#808080" color="#808080"><path d="M6 0H10L4.2 12.4H2Z" stroke="none"/><path d="M2 12h1v1h-1z" stroke="none"/><path d="M2 13h14v1h-14z" stroke="none"/></g></svg></span><span class="tb" title="ground" style="left:595px;top:46px"><svg width="18" height="17" viewBox="0 0 18 17" shape-rendering="crispEdges"><g transform="translate(1 1)" stroke="#FFFFFF" fill="#FFFFFF" color="#FFFFFF"><path d="M7 0h1v7h-1z" stroke="none"/><path d="M0 7h15v1.3h-15z" stroke="none"/><path d="M1 8L7.5 14.2L14 8" fill="none" stroke-width="1.3" shape-rendering="geometricPrecision"/></g><g stroke="#808080" fill="#808080" color="#808080"><path d="M7 0h1v7h-1z" stroke="none"/><path d="M0 7h15v1.3h-15z" stroke="none"/><path d="M1 8L7.5 14.2L14 8" fill="none" stroke-width="1.3" shape-rendering="geometricPrecision"/></g></svg></span><span class="tb" title="label" style="left:618px;top:46px"><svg width="18" height="17" viewBox="0 0 18 17" shape-rendering="crispEdges"><g transform="translate(1 1)" stroke="#FFFFFF" fill="#FFFFFF" color="#FFFFFF"><path d="M2.4 1.8H12.6Q14.2 1.8 14.2 3.2V8Q14.2 9.4 12.6 9.4H2.4Q0.8 9.4 0.8 8V3.2Q0.8 1.8 2.4 1.8Z" fill="none" stroke-width="1.7" shape-rendering="geometricPrecision"/><path d="M7 10h1v5h-1z" stroke="none"/></g><g stroke="#808080" fill="#808080" color="#808080"><path d="M2.4 1.8H12.6Q14.2 1.8 14.2 3.2V8Q14.2 9.4 12.6 9.4H2.4Q0.8 9.4 0.8 8V3.2Q0.8 1.8 2.4 1.8Z" fill="none" stroke-width="1.7" shape-rendering="geometricPrecision"/><path d="M7 10h1v5h-1z" stroke="none"/></g><g style="filter:drop-shadow(1px 1px 0 #fff)"><text x="4.8" y="8.6" font-family="'Liberation Sans', sans-serif" font-size="8" font-weight="bold" fill="#808080" stroke="#808080" stroke-width="0.3" textLength="5.6" lengthAdjust="spacingAndGlyphs">A</text></g></svg></span><span class="tb" title="res" style="left:641px;top:46px"><svg width="18" height="17" viewBox="0 0 18 17" shape-rendering="crispEdges"><g transform="translate(1 1)" stroke="#FFFFFF" fill="#FFFFFF" color="#FFFFFF"><path d="M7.8 0.4L8.4 1.6L14 4.2L2.2 9.6L8 12.8V14.8" fill="none" stroke-width="1.3" shape-rendering="geometricPrecision"/></g><g stroke="#808080" fill="#808080" color="#808080"><path d="M7.8 0.4L8.4 1.6L14 4.2L2.2 9.6L8 12.8V14.8" fill="none" stroke-width="1.3" shape-rendering="geometricPrecision"/></g></svg></span><span class="tb" title="cap" style="left:664px;top:46px"><svg width="18" height="17" viewBox="0 0 18 17" shape-rendering="crispEdges"><g transform="translate(1 1)" stroke="#FFFFFF" fill="#FFFFFF" color="#FFFFFF"><path d="M7 0h1v5h-1zM7 10h1v5h-1zM2 5h11v2h-11zM2 8h11v2h-11z" stroke="none"/></g><g stroke="#808080" fill="#808080" color="#808080"><path d="M7 0h1v5h-1zM7 10h1v5h-1zM2 5h11v2h-11zM2 8h11v2h-11z" stroke="none"/></g></svg></span><span class="tb" title="ind" style="left:687px;top:46px"><svg width="18" height="17" viewBox="0 0 18 17" shape-rendering="crispEdges"><g transform="translate(1 1)" stroke="#FFFFFF" fill="#FFFFFF" color="#FFFFFF"><path d="M5 0.5Q9.8 1 9.8 3.8Q9.8 6.6 5.6 7.2Q9.8 7.8 9.8 10.6Q9.8 13.6 5 14.2" fill="none" stroke-width="1.5" shape-rendering="geometricPrecision"/></g><g stroke="#808080" fill="#808080" color="#808080"><path d="M5 0.5Q9.8 1 9.8 3.8Q9.8 6.6 5.6 7.2Q9.8 7.8 9.8 10.6Q9.8 13.6 5 14.2" fill="none" stroke-width="1.5" shape-rendering="geometricPrecision"/></g></svg></span><span class="tb" title="diode" style="left:710px;top:46px"><svg width="18" height="17" viewBox="0 0 18 17" shape-rendering="crispEdges"><g transform="translate(1 1)" stroke="#FFFFFF" fill="#FFFFFF" color="#FFFFFF"><path d="M8 0h1v15h-1zM1 3h15v1.2h-15zM1 11h15v1h-15z" stroke="none"/><path d="M2 4L8.5 10.5L15 4" fill="none" stroke-width="1.5" shape-rendering="geometricPrecision"/></g><g stroke="#808080" fill="#808080" color="#808080"><path d="M8 0h1v15h-1zM1 3h15v1.2h-15zM1 11h15v1h-15z" stroke="none"/><path d="M2 4L8.5 10.5L15 4" fill="none" stroke-width="1.5" shape-rendering="geometricPrecision"/></g></svg></span><span class="tb" title="gate" style="left:733px;top:46px"><svg width="18" height="17" viewBox="0 0 18 17" shape-rendering="crispEdges"><g transform="translate(1 1)" stroke="#FFFFFF" fill="#FFFFFF" color="#FFFFFF"><path d="M3.8 2.5H8Q12.4 2.8 12.4 7Q12.4 11.2 8 11.5H3.8Z" fill="none" stroke-width="1.7" shape-rendering="geometricPrecision"/><path d="M0 4h4v1h-4zM0 9h4v1h-4zM12 7h4v1h-4z" stroke="none"/></g><g stroke="#808080" fill="#808080" color="#808080"><path d="M3.8 2.5H8Q12.4 2.8 12.4 7Q12.4 11.2 8 11.5H3.8Z" fill="none" stroke-width="1.7" shape-rendering="geometricPrecision"/><path d="M0 4h4v1h-4zM0 9h4v1h-4zM12 7h4v1h-4z" stroke="none"/></g></svg></span><span class="tb" title="move" style="left:756px;top:46px"><svg width="18" height="17" viewBox="0 0 18 17" shape-rendering="crispEdges"><g transform="translate(1 1)" stroke="#FFFFFF" fill="#FFFFFF" color="#FFFFFF"><path d="M0.5 7.6L2.5 5.9L4.6 6.2L3.6 3.5L2.5 1.4L3.6 0.4L5.3 1.1L7 4.2L7.7 1.8L9.7 0.3L11.8 0.5L13.5 2.8L15.2 4.5L16 7.2L15.5 10L13.5 12.4L11.8 13.4V14.6H6V13.4L3.2 10.7ZM9 2.1L11.1 6.2M11.1 1.8L13.1 5.9M13.1 3.5L14.5 6.2" fill="none" stroke-width="1.1" shape-rendering="geometricPrecision" stroke-linejoin="round"/></g><g stroke="#808080" fill="#808080" color="#808080"><path d="M0.5 7.6L2.5 5.9L4.6 6.2L3.6 3.5L2.5 1.4L3.6 0.4L5.3 1.1L7 4.2L7.7 1.8L9.7 0.3L11.8 0.5L13.5 2.8L15.2 4.5L16 7.2L15.5 10L13.5 12.4L11.8 13.4V14.6H6V13.4L3.2 10.7ZM9 2.1L11.1 6.2M11.1 1.8L13.1 5.9M13.1 3.5L14.5 6.2" fill="none" stroke-width="1.1" shape-rendering="geometricPrecision" stroke-linejoin="round"/></g></svg></span><span class="tb" title="drag" style="left:779px;top:46px"><svg width="18" height="17" viewBox="0 0 18 17" shape-rendering="crispEdges"><g transform="translate(1 1)" stroke="#FFFFFF" fill="#FFFFFF" color="#FFFFFF"><path d="M1.6 6.8Q1.2 5.6 2.6 5.2Q3.8 5 4.6 6V4.4Q4.8 3.2 6 3.2Q6.8 3.2 7 4V3.4Q7.4 2.4 8.4 2.4Q9.6 2.4 9.8 3.6Q10.4 2.8 11.4 3Q12.4 3.4 12.4 4.6Q13.6 4.4 14 5.6V8.6L12.6 11V13.5H5.4V11L1.6 6.8M7 4V6.6M9.8 3.6V6.6M12.4 4.8V7" fill="none" stroke-width="1.1" shape-rendering="geometricPrecision"/></g><g stroke="#808080" fill="#808080" color="#808080"><path d="M1.6 6.8Q1.2 5.6 2.6 5.2Q3.8 5 4.6 6V4.4Q4.8 3.2 6 3.2Q6.8 3.2 7 4V3.4Q7.4 2.4 8.4 2.4Q9.6 2.4 9.8 3.6Q10.4 2.8 11.4 3Q12.4 3.4 12.4 4.6Q13.6 4.4 14 5.6V8.6L12.6 11V13.5H5.4V11L1.6 6.8M7 4V6.6M9.8 3.6V6.6M12.4 4.8V7" fill="none" stroke-width="1.1" shape-rendering="geometricPrecision"/></g></svg></span><span class="tb" title="undo" style="left:802px;top:46px"><svg width="18" height="17" viewBox="0 0 18 17" shape-rendering="crispEdges"><g shape-rendering="geometricPrecision" fill="none"><path d="M3.6 7.2Q5.2 2.6 9.6 2.8Q14 3.4 14.2 8Q13.8 12.4 9.4 13Q7.6 13 6.4 12.2" stroke="#000" stroke-width="1.1"/><path d="M7.2 3.4Q9.6 2.2 12.2 4Q13.6 5.4 14 7.2" stroke="#808000" stroke-width="1.1"/><path d="M1.6 4.6L1.8 8.6L5.6 7.4Z" fill="#000" stroke="none"/></g></svg></span><span class="tb" title="redo" style="left:825px;top:46px"><svg width="18" height="17" viewBox="0 0 18 17" shape-rendering="crispEdges"><g transform="translate(1 1)" stroke="#FFFFFF" fill="#FFFFFF" color="#FFFFFF"><g transform="translate(0 0.6)"><path d="M12.4 7.2Q10.8 2.4 6.4 2.6Q1.8 3.2 1.6 8Q2 12.6 6.6 13.2Q8.4 13.2 9.6 12.4" fill="none" stroke-width="1.2" shape-rendering="geometricPrecision"/><path d="M14.6 4.2L14.4 8.8L10 7.4Z" stroke="none" shape-rendering="geometricPrecision"/></g></g><g stroke="#808080" fill="#808080" color="#808080"><g transform="translate(0 0.6)"><path d="M12.4 7.2Q10.8 2.4 6.4 2.6Q1.8 3.2 1.6 8Q2 12.6 6.6 13.2Q8.4 13.2 9.6 12.4" fill="none" stroke-width="1.2" shape-rendering="geometricPrecision"/><path d="M14.6 4.2L14.4 8.8L10 7.4Z" stroke="none" shape-rendering="geometricPrecision"/></g></g></svg></span><span class="tb" title="rotate" style="left:848px;top:46px"><svg width="18" height="17" viewBox="0 0 18 17" shape-rendering="crispEdges"><g transform="translate(1 1)" stroke="#FFFFFF" fill="#FFFFFF" color="#FFFFFF"><path d="M2.5 3.5Q5.5 0.3 9 0.5Q12 0.6 13.4 3.4" fill="none" stroke-width="1" shape-rendering="geometricPrecision"/><path d="M14.4 1L14 4.6L10.8 3.6Z" stroke="none" shape-rendering="geometricPrecision"/></g><g stroke="#808080" fill="#808080" color="#808080"><path d="M2.5 3.5Q5.5 0.3 9 0.5Q12 0.6 13.4 3.4" fill="none" stroke-width="1" shape-rendering="geometricPrecision"/><path d="M14.4 1L14 4.6L10.8 3.6Z" stroke="none" shape-rendering="geometricPrecision"/></g><g style="filter:drop-shadow(1px 1px 0 #fff)"><text x="-0.2" y="15" font-family="'Liberation Sans', sans-serif" font-size="12.5" font-weight="bold" fill="#808080" stroke="#808080" stroke-width="0.5" textLength="5.4" lengthAdjust="spacingAndGlyphs">E</text></g><g style="filter:drop-shadow(1px 1px 0 #fff)"><text x="0" y="0" transform="translate(7 7.8) rotate(90)" font-family="'Liberation Sans', sans-serif" font-size="12.5" font-weight="bold" fill="#808080" stroke="#808080" stroke-width="0.4" textLength="5.2" lengthAdjust="spacingAndGlyphs">E</text></g></svg></span><span class="tb" title="mirror" style="left:871px;top:46px"><svg width="18" height="17" viewBox="0 0 18 17" shape-rendering="crispEdges"><g transform="translate(1 1)" stroke="#FFFFFF" fill="#FFFFFF" color="#FFFFFF"><path d="M2.5 3.5Q5.5 0.3 9 0.5Q12 0.6 13.4 3.4" fill="none" stroke-width="1" shape-rendering="geometricPrecision"/><path d="M14.4 1L14 4.6L10.8 3.6Z" stroke="none" shape-rendering="geometricPrecision"/></g><g stroke="#808080" fill="#808080" color="#808080"><path d="M2.5 3.5Q5.5 0.3 9 0.5Q12 0.6 13.4 3.4" fill="none" stroke-width="1" shape-rendering="geometricPrecision"/><path d="M14.4 1L14 4.6L10.8 3.6Z" stroke="none" shape-rendering="geometricPrecision"/></g><g style="filter:drop-shadow(1px 1px 0 #fff)"><text x="-0.2" y="15" font-family="'Liberation Sans', sans-serif" font-size="12.5" font-weight="bold" fill="#808080" stroke="#808080" stroke-width="0.5" textLength="5.4" lengthAdjust="spacingAndGlyphs">E</text></g><g style="filter:drop-shadow(1px 1px 0 #fff)"><text x="0" y="15" transform="translate(16.2 0) scale(-1 1)" font-family="'Liberation Sans', sans-serif" font-size="12.5" font-weight="bold" fill="#808080" stroke="#808080" stroke-width="0.5" textLength="5.4" lengthAdjust="spacingAndGlyphs">E</text></g></svg></span><span class="tb" title="text" style="left:894px;top:46px"><span class="aa">Aa</span></span><span class="tb" title="op" style="left:917px;top:46px"><svg width="18" height="17" viewBox="0 0 18 17" shape-rendering="crispEdges"><g style="filter:drop-shadow(1px 1px 0 #fff)"><text x="0.6" y="10.4" font-family="'Liberation Sans', sans-serif" font-size="10" font-weight="bold" fill="#808080" stroke="#808080" stroke-width="0.2" textLength="13.6" lengthAdjust="spacingAndGlyphs">.op</text></g></svg></span></div>
<div id="tabs"><i style="left:4px;top:71px;width:1019px;height:1px;background:#808080;"></i><i style="left:5px;top:72px;width:1018px;height:1px;background:#404040;"></i><i style="left:10px;top:75px;width:97px;height:1px;background:#FFFFFF;"></i><i style="left:9px;top:76px;width:1px;height:1px;background:#FFFFFF;"></i><i style="left:8px;top:77px;width:1px;height:18px;background:#FFFFFF;"></i><i style="left:6px;top:94px;width:102px;height:1px;background:#FFFFFF;"></i><i style="left:6px;top:95px;width:102px;height:1px;background:#ECEAE5;"></i><i style="left:212px;top:94px;width:809px;height:1px;background:#FFFFFF;"></i><i style="left:212px;top:95px;width:809px;height:1px;background:#ECEAE5;"></i><i style="left:1021px;top:94px;width:1px;height:1px;background:#404040;"></i><i style="left:107px;top:75px;width:1px;height:21px;background:#FFFFFF;"></i><i style="left:108px;top:74px;width:1px;height:1px;background:#FFFFFF;"></i><i style="left:109px;top:73px;width:101px;height:1px;background:#FFFFFF;"></i><i style="left:210px;top:74px;width:1px;height:1px;background:#404040;"></i><i style="left:210px;top:75px;width:1px;height:21px;background:#808080;"></i><i style="left:211px;top:75px;width:1px;height:21px;background:#404040;"></i><i style="left:4px;top:96px;width:1016px;height:1px;background:#808080;"></i><i style="left:5px;top:97px;width:1015px;height:1px;background:#404040;"></i><svg width="11" height="16" viewBox="0 0 11 16" style="left:16px;top:77px" shape-rendering="crispEdges"><path d="M9 0h1v1h-1zM8 1h1v1h-1zM7 2h1v1h-1zM3 3h2v1h-2zM6 3h1v1h-1zM3 4h3v1h-3zM3 5h2v1h-2zM3 6h2v1h-2zM0 7h5v1h-5zM3 8h2v1h-2zM3 9h2v1h-2zM3 10h3v1h-3zM3 11h2v1h-2zM6 11h1v1h-1zM8 11h1v1h-1zM7 12h2v1h-2zM6 13h3v1h-3zM9 14h1v1h-1zM10 15h1v1h-1z" fill="#0000FF"/></svg><svg width="16" height="16" viewBox="0 0 16 16" style="left:115px;top:75px" shape-rendering="crispEdges"><path d="M0 0h2v1h-2zM0 2h2v1h-2zM0 3h2v1h-2zM0 5h2v1h-2zM0 6h2v1h-2zM0 8h2v1h-2zM0 9h2v1h-2zM0 11h2v1h-2zM0 12h2v1h-2zM0 14h2v1h-2zM3 14h2v1h-2zM6 14h2v1h-2zM9 14h2v1h-2zM12 14h2v1h-2zM15 14h1v1h-1zM0 15h2v1h-2zM3 15h2v1h-2zM6 15h2v1h-2zM9 15h2v1h-2zM12 15h2v1h-2zM15 15h1v1h-1z" fill="#D4D0C8"/><path d="M2 0h1v1h-1zM0 1h3v1h-3zM2 2h1v1h-1zM2 3h1v1h-1zM0 4h3v1h-3zM2 5h1v1h-1zM2 6h1v1h-1zM0 7h3v1h-3zM2 8h1v1h-1zM2 9h1v1h-1zM0 10h3v1h-3zM2 11h1v1h-1zM2 12h1v1h-1zM0 13h16v1h-16zM2 14h1v1h-1zM5 14h1v1h-1zM8 14h1v1h-1zM11 14h1v1h-1zM14 14h1v1h-1zM2 15h1v1h-1zM5 15h1v1h-1zM8 15h1v1h-1zM11 15h1v1h-1zM14 15h1v1h-1z" fill="#000000"/><path d="M3 0h13v1h-13zM3 1h13v1h-13zM3 2h13v1h-13zM3 3h13v1h-13zM3 4h13v1h-13zM3 5h13v1h-13zM3 6h13v1h-13zM3 7h13v1h-13zM3 8h13v1h-13zM3 9h13v1h-13zM3 10h13v1h-13zM3 11h13v1h-13zM3 12h13v1h-13z" fill="#C0C0C0"/><path d="M3 8.2L6 4.5H8.7L10.7 7.1H12.7L16 3.5" stroke="#FF0000" stroke-width="1.8" fill="none" shape-rendering="geometricPrecision"/></svg><svg class="ov" width="1024" height="555" viewBox="0 0 1024 555"><text x="36" y="90" font-family="'Liberation Sans', sans-serif" font-size="13" fill="#000" textLength="67.8" lengthAdjust="spacingAndGlyphs" xml:space="preserve">! NMOS- test2</text><text x="137" y="88" font-family="'Liberation Sans', sans-serif" font-size="13" fill="#000" textLength="67.4" lengthAdjust="spacingAndGlyphs" xml:space="preserve">! NMOS- test2</text></svg></div>
<main id="mdi">
<section id="schematic-window"><i style="left:6px;top:98px;width:1px;height:438px;background:#D4D0C8;"></i><i style="left:7px;top:98px;width:1px;height:438px;background:#FFFFFF;"></i><i style="left:8px;top:98px;width:1px;height:438px;background:#D4D0C8;"></i><i style="left:6px;top:98px;width:490px;height:1px;background:#D4D0C8;"></i><i style="left:7px;top:99px;width:489px;height:1px;background:#FFFFFF;"></i><i style="left:8px;top:100px;width:488px;height:1px;background:#D4D0C8;"></i><i style="left:9px;top:101px;width:487px;height:18px;background:#808080;"></i><i style="left:9px;top:119px;width:487px;height:1px;background:#D4D0C8;"></i><i style="left:9px;top:120px;width:487px;height:1px;background:#808080;"></i><i style="left:10px;top:121px;width:486px;height:1px;background:#404040;"></i><i style="left:9px;top:120px;width:1px;height:416px;background:#808080;"></i><i style="left:10px;top:121px;width:1px;height:415px;background:#404040;"></i><i style="left:11px;top:122px;width:485px;height:414px;background:#C0C0C0;"></i><svg width="11" height="16" viewBox="0 0 11 16" style="left:13px;top:102px" shape-rendering="crispEdges"><path d="M9 0h1v1h-1zM8 1h1v1h-1zM7 2h1v1h-1zM3 3h2v1h-2zM6 3h1v1h-1zM3 4h3v1h-3zM3 5h2v1h-2zM3 6h2v1h-2zM0 7h5v1h-5zM3 8h2v1h-2zM3 9h2v1h-2zM3 10h3v1h-3zM3 11h2v1h-2zM6 11h1v1h-1zM8 11h1v1h-1zM7 12h2v1h-2zM6 13h3v1h-3zM9 14h1v1h-1zM10 15h1v1h-1z" fill="#0000FF"/></svg><svg class="ov" width="1024" height="555" viewBox="0 0 1024 555"><text y="114" font-family="'DejaVu Sans Condensed', 'Liberation Sans', sans-serif" font-size="11" font-weight="bold" fill="#D4D0C8" xml:space="preserve"><tspan x="27.8">!</tspan><tspan> </tspan><tspan x="34.1" textLength="71.4" lengthAdjust="spacingAndGlyphs">NMOS- test2</tspan></text></svg><span class="cbtn" style="left:475px;top:103px;width:16px;height:14px"><i style="left:4px;top:9px;width:6px;height:2px;background:#000"></i></span><span style="position:absolute;left:491px;top:103px;width:5px;height:14px;overflow:hidden;display:block"><span class="cbtn" style="left:0px;top:0px;width:16px;height:14px"><i style="left:3px;top:2px;width:9px;height:9px;box-sizing:border-box;border:1px solid #000;border-top-width:2px"></i></span></span><svg id="schematic" class="ov" width="1024" height="555" viewBox="0 0 1024 555"><g shape-rendering="crispEdges" stroke-width="1" fill="none"><path d="M197.5 209L197.5 263" stroke="#0000FF"/><path d="M197 209.5L357 209.5" stroke="#0000FF"/><path d="M356.5 209L356.5 307" stroke="#0000FF"/><path d="M38 315.5L166 315.5" stroke="#0000FF"/><path d="M38.5 315L38.5 328" stroke="#0000FF"/><path d="M38.5 379L38.5 389" stroke="#0000FF"/><path d="M197.5 326L197.5 389" stroke="#0000FF"/><path d="M356.5 358L356.5 389" stroke="#0000FF"/><path d="M26 389.5H51M26.5 389.5L38.5 401.5L50.5 389.5" stroke="#0000FF" fill="none"/><path d="M185 389.5H210M185.5 389.5L197.5 401.5L209.5 389.5" stroke="#0000FF" fill="none"/><path d="M344 389.5H369M344.5 389.5L356.5 401.5L368.5 389.5" stroke="#0000FF" fill="none"/><circle cx="38.3" cy="352.3" r="20.4" stroke="#000090" fill="none"/><path d="M38.5 326.6L38.5 332.6" stroke="#000090"/><path d="M38.5 372.4L38.5 379.4" stroke="#000090"/><path d="M33 338.5L44 338.5" stroke="#000090"/><path d="M38.5 333L38.5 344" stroke="#000090"/><path d="M33 365.5L44 365.5" stroke="#000090"/><circle cx="356.1" cy="330.9" r="20.6" stroke="#000090" fill="none"/><path d="M356.5 305.4L356.5 311.4" stroke="#000090"/><path d="M356.5 351.6L356.5 358.6" stroke="#000090"/><path d="M351 317.5L362 317.5" stroke="#000090"/><path d="M356.5 312L356.5 323" stroke="#000090"/><path d="M351 344.5L362 344.5" stroke="#000090"/><path d="M166 315.5L172 315.5" stroke="#000090"/><path d="M171.5 272L171.5 316" stroke="#000090"/><path d="M176.5 267L176.5 279" stroke="#000090"/><path d="M176.5 288L176.5 300" stroke="#000090"/><path d="M176.5 309L176.5 321" stroke="#000090"/><path d="M176 272.5L198 272.5" stroke="#000090"/><path d="M197.5 262L197.5 273" stroke="#000090"/><path d="M176 315.5L198 315.5" stroke="#000090"/><path d="M197.5 293L197.5 326" stroke="#000090"/><path d="M192 293.5L198 293.5" stroke="#000090"/><path d="M177 293.5L192.5 291.5V296.5Z" stroke="#000090" fill="none"/></g><g><text x="236" y="205" font-family="'Liberation Sans', sans-serif" font-size="14.5" font-weight="bold" fill="#000" xml:space="preserve">d</text><text x="103.4" y="310.5" font-family="'Liberation Sans', sans-serif" font-size="14.5" font-weight="bold" fill="#000" textLength="16.3" lengthAdjust="spacingAndGlyphs" xml:space="preserve">gs</text><text x="202.5" y="288" font-family="'Liberation Sans', sans-serif" font-size="14.5" font-weight="bold" fill="#000" textLength="19" lengthAdjust="spacingAndGlyphs" xml:space="preserve">M1</text><text x="202.5" y="314" font-family="'Liberation Sans', sans-serif" font-size="14.5" font-weight="bold" fill="#000" textLength="65.5" lengthAdjust="spacingAndGlyphs" xml:space="preserve">IRL2203N</text><text x="57" y="340.6" font-family="'Liberation Sans', sans-serif" font-size="14.5" font-weight="bold" fill="#000" textLength="15.5" lengthAdjust="spacingAndGlyphs" xml:space="preserve">V1</text><text x="61.5" y="359.5" font-family="'Liberation Sans', sans-serif" font-size="14.5" font-weight="bold" fill="#000" textLength="37" lengthAdjust="spacingAndGlyphs" xml:space="preserve">{Vgs}</text><text x="375" y="320" font-family="'Liberation Sans', sans-serif" font-size="14.5" font-weight="bold" fill="#000" textLength="16.5" lengthAdjust="spacingAndGlyphs" xml:space="preserve">V2</text><text x="376.5" y="350.6" font-family="'Liberation Sans', sans-serif" font-size="14.5" font-weight="bold" fill="#000" textLength="114.5" lengthAdjust="spacingAndGlyphs" xml:space="preserve">PWL(0 0 1 {Vds})</text><text x="17.3" y="420" font-family="'Liberation Sans', sans-serif" font-size="14.5" font-weight="bold" fill="#000" textLength="41.7" lengthAdjust="spacingAndGlyphs" xml:space="preserve">.tran 1</text><text x="17.3" y="439" font-family="'Liberation Sans', sans-serif" font-size="14.5" font-weight="bold" fill="#000" textLength="156" lengthAdjust="spacingAndGlyphs" xml:space="preserve">.options plotwinsize=0</text><text x="17.3" y="457" font-family="'Liberation Sans', sans-serif" font-size="14.5" font-weight="bold" fill="#000" textLength="153.8" lengthAdjust="spacingAndGlyphs" xml:space="preserve">.step param vds 0 10 1</text><text x="17.3" y="475.5" font-family="'Liberation Sans', sans-serif" font-size="14.5" font-weight="bold" fill="#000" textLength="319.3" lengthAdjust="spacingAndGlyphs" xml:space="preserve">.step param vgs list 2.7 3.0 3.3 3.5 3.7 4.5 10 15</text></g></svg></section>
<section id="plot-window"><i style="left:496px;top:98px;width:526px;height:437px;background:#D4D0C8;"></i><i style="left:497px;top:98px;width:1px;height:435px;background:#FFFFFF;"></i><i style="left:500px;top:100px;width:520px;height:18px;background:#0A246A;"></i><i style="left:500px;top:119px;width:520px;height:1px;background:#808080;"></i><i style="left:501px;top:120px;width:518px;height:1px;background:#404040;"></i><i style="left:500px;top:119px;width:1px;height:412px;background:#808080;"></i><i style="left:501px;top:120px;width:1px;height:410px;background:#404040;"></i><i style="left:502px;top:121px;width:516px;height:408px;background:#FFFFFF;"></i><i style="left:1018px;top:120px;width:1px;height:410px;background:#D4D0C8;"></i><i style="left:1019px;top:119px;width:1px;height:412px;background:#FFFFFF;"></i><i style="left:501px;top:529px;width:518px;height:1px;background:#D4D0C8;"></i><i style="left:500px;top:530px;width:520px;height:1px;background:#FFFFFF;"></i><i style="left:497px;top:533px;width:525px;height:1px;background:#808080;"></i><i style="left:496px;top:534px;width:526px;height:1px;background:#404040;"></i><svg width="16" height="16" viewBox="0 0 16 16" style="left:502px;top:101px" shape-rendering="crispEdges"><path d="M0 0h2v1h-2zM0 2h2v1h-2zM0 3h2v1h-2zM0 5h2v1h-2zM0 6h2v1h-2zM0 8h2v1h-2zM0 9h2v1h-2zM0 11h2v1h-2zM0 12h2v1h-2zM0 14h2v1h-2zM3 14h2v1h-2zM6 14h2v1h-2zM9 14h2v1h-2zM12 14h2v1h-2zM15 14h1v1h-1zM0 15h2v1h-2zM3 15h2v1h-2zM6 15h2v1h-2zM9 15h2v1h-2zM12 15h2v1h-2zM15 15h1v1h-1z" fill="#D4D0C8"/><path d="M2 0h1v1h-1zM0 1h3v1h-3zM2 2h1v1h-1zM2 3h1v1h-1zM0 4h3v1h-3zM2 5h1v1h-1zM2 6h1v1h-1zM0 7h3v1h-3zM2 8h1v1h-1zM2 9h1v1h-1zM0 10h3v1h-3zM2 11h1v1h-1zM2 12h1v1h-1zM0 13h16v1h-16zM2 14h1v1h-1zM5 14h1v1h-1zM8 14h1v1h-1zM11 14h1v1h-1zM14 14h1v1h-1zM2 15h1v1h-1zM5 15h1v1h-1zM8 15h1v1h-1zM11 15h1v1h-1zM14 15h1v1h-1z" fill="#000000"/><path d="M3 0h13v1h-13zM3 1h13v1h-13zM3 2h13v1h-13zM3 3h13v1h-13zM3 4h13v1h-13zM3 5h13v1h-13zM3 6h13v1h-13zM3 7h13v1h-13zM3 8h13v1h-13zM3 9h13v1h-13zM3 10h13v1h-13zM3 11h13v1h-13zM3 12h13v1h-13z" fill="#C0C0C0"/><path d="M3 8.2L6 4.5H8.7L10.7 7.1H12.7L16 3.5" stroke="#FF0000" stroke-width="1.8" fill="none" shape-rendering="geometricPrecision"/></svg><svg class="ov" width="1024" height="555" viewBox="0 0 1024 555"><text y="113" font-family="'DejaVu Sans Condensed', 'Liberation Sans', sans-serif" font-size="11" font-weight="bold" fill="#fff" xml:space="preserve"><tspan x="519.1">!</tspan><tspan> </tspan><tspan x="525.1" textLength="71.4" lengthAdjust="spacingAndGlyphs">NMOS- test2</tspan></text></svg><span class="cbtn" style="left:968px;top:102px;width:16px;height:14px"><i style="left:4px;top:9px;width:6px;height:2px;background:#000"></i></span><span class="cbtn" style="left:984px;top:102px;width:16px;height:14px"><i style="left:3px;top:2px;width:9px;height:9px;box-sizing:border-box;border:1px solid #000;border-top-width:2px"></i></span><span class="cbtn" style="left:1002px;top:102px;width:16px;height:14px"><svg width="16" height="14" viewBox="0 0 16 14" shape-rendering="crispEdges" style="position:absolute;left:0;top:0"><path d="M4 3h2v1h1v1h2v-1h1v-1h2v1h-1v1h-1v1h-1v1h1v1h1v1h1v1h-2v-1h-1v-1h-2v1h-1v1h-2v-1h1v-1h1v-1h1v-1h-1v-1h-1v-1h-1z" fill="#000"/></svg></span><svg id="plot" class="ov" width="1024" height="555" viewBox="0 0 1024 555"><g shape-rendering="crispEdges" stroke-width="1"><path d="M581.5 140V503M628.5 140V503M675.5 140V503M722.5 140V503M769.5 140V503M816.5 140V503M863.5 140V503M910.5 140V503M957.5 140V503M535 467.5H1004M535 430.5H1004M535 394.5H1004M535 357.5H1004M535 321.5H1004M535 285.5H1004M535 248.5H1004M535 212.5H1004M535 175.5H1004" stroke="#4A4A4A" stroke-dasharray="3 3" fill="none"/><path d="M534.5 139V511M1004.5 139V511M527 139.5H1005M527 503.5H1005M581.5 503V511M527 467.5H534M628.5 503V511M527 430.5H534M675.5 503V511M527 394.5H534M722.5 503V511M527 357.5H534M769.5 503V511M527 321.5H534M816.5 503V511M527 285.5H534M863.5 503V511M527 248.5H534M910.5 503V511M527 212.5H534M957.5 503V511M527 175.5H534" stroke="#404040" fill="none"/><path d="M534.5 503.5L1004.5 467.1" stroke="#008000" fill="none"/><path d="M534.5 503.5L1004.5 430.7" stroke="#0000C0" fill="none"/><path d="M534.5 503.5L1004.5 394.3" stroke="#C08000" fill="none"/><path d="M534.5 503.5L1004.5 357.9" stroke="#900090" fill="none"/><path d="M534.5 503.5L1004.5 321.5" stroke="#800000" fill="none"/><path d="M534.5 503.5L1004.5 285.1" stroke="#B0B000" fill="none"/><path d="M534.5 503.5L1004.5 248.7" stroke="#00F000" fill="none"/><path d="M534.5 503.5L1004.5 212.3" stroke="#0000FF" fill="none"/><path d="M534.5 503.5L1004.5 175.9" stroke="#FF0000" fill="none"/><path d="M534.5 503.5L1004.5 139.5" stroke="#00A8A8" fill="none"/></g><g><text x="510.4" y="508" font-family="'Liberation Sans', sans-serif" font-size="13.6" fill="#262626" textLength="15.6" lengthAdjust="spacingAndGlyphs" stroke="#262626" stroke-width="0.6" xml:space="preserve">0V</text><text x="510.4" y="472" font-family="'Liberation Sans', sans-serif" font-size="13.6" fill="#262626" textLength="15.6" lengthAdjust="spacingAndGlyphs" stroke="#262626" stroke-width="0.6" xml:space="preserve">1V</text><text x="510.4" y="435" font-family="'Liberation Sans', sans-serif" font-size="13.6" fill="#262626" textLength="15.6" lengthAdjust="spacingAndGlyphs" stroke="#262626" stroke-width="0.6" xml:space="preserve">2V</text><text x="510.4" y="399" font-family="'Liberation Sans', sans-serif" font-size="13.6" fill="#262626" textLength="15.6" lengthAdjust="spacingAndGlyphs" stroke="#262626" stroke-width="0.6" xml:space="preserve">3V</text><text x="510.4" y="362" font-family="'Liberation Sans', sans-serif" font-size="13.6" fill="#262626" textLength="15.6" lengthAdjust="spacingAndGlyphs" stroke="#262626" stroke-width="0.6" xml:space="preserve">4V</text><text x="510.4" y="326" font-family="'Liberation Sans', sans-serif" font-size="13.6" fill="#262626" textLength="15.6" lengthAdjust="spacingAndGlyphs" stroke="#262626" stroke-width="0.6" xml:space="preserve">5V</text><text x="510.4" y="290" font-family="'Liberation Sans', sans-serif" font-size="13.6" fill="#262626" textLength="15.6" lengthAdjust="spacingAndGlyphs" stroke="#262626" stroke-width="0.6" xml:space="preserve">6V</text><text x="510.4" y="253" font-family="'Liberation Sans', sans-serif" font-size="13.6" fill="#262626" textLength="15.6" lengthAdjust="spacingAndGlyphs" stroke="#262626" stroke-width="0.6" xml:space="preserve">7V</text><text x="510.4" y="217" font-family="'Liberation Sans', sans-serif" font-size="13.6" fill="#262626" textLength="15.6" lengthAdjust="spacingAndGlyphs" stroke="#262626" stroke-width="0.6" xml:space="preserve">8V</text><text x="510.4" y="180" font-family="'Liberation Sans', sans-serif" font-size="13.6" fill="#262626" textLength="15.6" lengthAdjust="spacingAndGlyphs" stroke="#262626" stroke-width="0.6" xml:space="preserve">9V</text><text x="502.6" y="144" font-family="'Liberation Sans', sans-serif" font-size="13.6" fill="#262626" textLength="23.4" lengthAdjust="spacingAndGlyphs" stroke="#262626" stroke-width="0.6" xml:space="preserve">10V</text><text x="520.7" y="524" font-family="'Liberation Sans', sans-serif" font-size="13.6" fill="#262626" textLength="26.5" lengthAdjust="spacingAndGlyphs" stroke="#262626" stroke-width="0.6" xml:space="preserve">0.0s</text><text x="567.7" y="524" font-family="'Liberation Sans', sans-serif" font-size="13.6" fill="#262626" textLength="26.5" lengthAdjust="spacingAndGlyphs" stroke="#262626" stroke-width="0.6" xml:space="preserve">0.1s</text><text x="614.7" y="524" font-family="'Liberation Sans', sans-serif" font-size="13.6" fill="#262626" textLength="26.5" lengthAdjust="spacingAndGlyphs" stroke="#262626" stroke-width="0.6" xml:space="preserve">0.2s</text><text x="661.7" y="524" font-family="'Liberation Sans', sans-serif" font-size="13.6" fill="#262626" textLength="26.5" lengthAdjust="spacingAndGlyphs" stroke="#262626" stroke-width="0.6" xml:space="preserve">0.3s</text><text x="708.7" y="524" font-family="'Liberation Sans', sans-serif" font-size="13.6" fill="#262626" textLength="26.5" lengthAdjust="spacingAndGlyphs" stroke="#262626" stroke-width="0.6" xml:space="preserve">0.4s</text><text x="755.7" y="524" font-family="'Liberation Sans', sans-serif" font-size="13.6" fill="#262626" textLength="26.5" lengthAdjust="spacingAndGlyphs" stroke="#262626" stroke-width="0.6" xml:space="preserve">0.5s</text><text x="802.7" y="524" font-family="'Liberation Sans', sans-serif" font-size="13.6" fill="#262626" textLength="26.5" lengthAdjust="spacingAndGlyphs" stroke="#262626" stroke-width="0.6" xml:space="preserve">0.6s</text><text x="849.7" y="524" font-family="'Liberation Sans', sans-serif" font-size="13.6" fill="#262626" textLength="26.5" lengthAdjust="spacingAndGlyphs" stroke="#262626" stroke-width="0.6" xml:space="preserve">0.7s</text><text x="896.7" y="524" font-family="'Liberation Sans', sans-serif" font-size="13.6" fill="#262626" textLength="26.5" lengthAdjust="spacingAndGlyphs" stroke="#262626" stroke-width="0.6" xml:space="preserve">0.8s</text><text x="943.7" y="524" font-family="'Liberation Sans', sans-serif" font-size="13.6" fill="#262626" textLength="26.5" lengthAdjust="spacingAndGlyphs" stroke="#262626" stroke-width="0.6" xml:space="preserve">0.9s</text><text x="990.7" y="524" font-family="'Liberation Sans', sans-serif" font-size="13.6" fill="#262626" textLength="26.5" lengthAdjust="spacingAndGlyphs" stroke="#262626" stroke-width="0.6" xml:space="preserve">1.0s</text><text x="757.5" y="134" font-family="'Liberation Sans', sans-serif" font-size="14" font-weight="bold" fill="#00EE00" textLength="23" lengthAdjust="spacingAndGlyphs" xml:space="preserve">V(d)</text></g></svg></section>
</main>
<footer id="statusbar"><i style="left:496px;top:535px;width:526px;height:1px;background:#D4D0C8;"></i><i style="left:4px;top:536px;width:1020px;height:1px;background:#FFFFFF;"></i><i style="left:2px;top:537px;width:1022px;height:18px;background:#D4D0C8;"></i><svg class="ov" width="1024" height="555" viewBox="0 0 1024 555"><text x="5.7" y="551" font-family="'DejaVu Sans Condensed', 'Liberation Sans', sans-serif" font-size="11" fill="#000" textLength="31.5" lengthAdjust="spacingAndGlyphs" xml:space="preserve">Ready</text></svg><i style="left:955px;top:539px;width:50px;height:1px;background:#808080;"></i><i style="left:955px;top:539px;width:1px;height:16px;background:#808080;"></i><i style="left:1005px;top:539px;width:1px;height:16px;background:#FFFFFF;"></i><i style="left:955px;top:554px;width:51px;height:1px;background:#FFFFFF;"></i><svg width="14" height="14" viewBox="0 0 14 14" style="left:1010px;top:541px" shape-rendering="crispEdges"><path d="M13 1h1v1h-1zM12 2h1v1h-1zM11 3h1v1h-1zM10 4h1v1h-1zM9 5h1v1h-1zM13 5h1v1h-1zM8 6h1v1h-1zM12 6h1v1h-1zM7 7h1v1h-1zM11 7h1v1h-1zM6 8h1v1h-1zM10 8h1v1h-1zM5 9h1v1h-1zM9 9h1v1h-1zM13 9h1v1h-1zM4 10h1v1h-1zM8 10h1v1h-1zM12 10h1v1h-1zM3 11h1v1h-1zM7 11h1v1h-1zM11 11h1v1h-1zM2 12h1v1h-1zM6 12h1v1h-1zM10 12h1v1h-1zM1 13h1v1h-1zM5 13h1v1h-1zM9 13h1v1h-1zM13 13h1v1h-1z" fill="#FFFFFF"/><path d="M13 2h1v1h-1zM12 3h2v1h-2zM11 4h2v1h-2zM10 5h2v1h-2zM9 6h2v1h-2zM13 6h1v1h-1zM8 7h2v1h-2zM12 7h2v1h-2zM7 8h2v1h-2zM11 8h2v1h-2zM6 9h2v1h-2zM10 9h2v1h-2zM5 10h2v1h-2zM9 10h2v1h-2zM13 10h1v1h-1zM4 11h2v1h-2zM8 11h2v1h-2zM12 11h2v1h-2zM3 12h2v1h-2zM7 12h2v1h-2zM11 12h2v1h-2zM2 13h2v1h-2zM6 13h2v1h-2zM10 13h2v1h-2z" fill="#808080"/></svg></footer>
</div>
</body>
</html>
